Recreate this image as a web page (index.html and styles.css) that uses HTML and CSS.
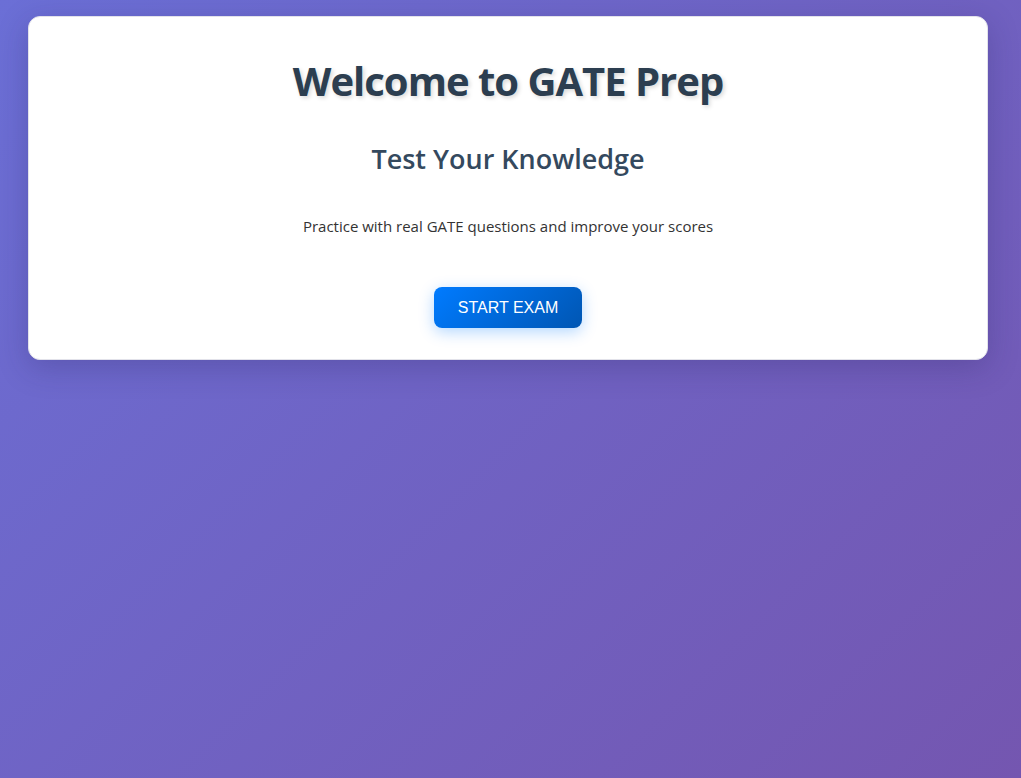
FILE: index.html
```html
<!DOCTYPE html>
<html lang="en">
<head>
<meta charset="utf-8">
<title>GATE Prep</title>
<link rel="stylesheet" href="styles.css">
</head>
<body>
<main class="page">
  <section class="card">
    <h1 class="title">Welcome to GATE Prep</h1>
    <h2 class="subtitle">Test Your Knowledge</h2>
    <p class="lead">Practice with real GATE questions and improve your scores</p>
    <button class="start-btn" type="button">START EXAM</button>
  </section>
</main>
</body>
</html>
```

FILE: styles.css
```css
html, body {
  margin: 0;
  padding: 0;
  height: 100%;
}
body {
  font-family: "Open Sans", "Noto Sans", sans-serif;
  background: linear-gradient(135deg, #6b6fd6 0%, #7456b0 100%);
  min-height: 100vh;
}
.page {
  padding: 16px 33px 0 28px;
}
.card {
  box-sizing: border-box;
  width: 960px;
  height: 344px;
  background: #fff;
  border-radius: 12px;
  border: 1px solid #e2e2ea;
  box-shadow: 0 8px 30px rgba(40, 30, 90, 0.25);
  display: flex;
  flex-direction: column;
  align-items: center;
  padding-top: 38px;
}
.title {
  margin: 0;
  font-size: 40px;
  font-weight: 700;
  letter-spacing: -1px;
  color: #2c3e50;
  line-height: 52px;
  text-shadow: 2px 2px 4px rgba(0, 0, 0, 0.15);
}
.subtitle {
  margin: 34px 0 0;
  font-size: 27px;
  font-weight: 600;
  letter-spacing: 0;
  color: #34495e;
  line-height: 36px;
}
.lead {
  margin: 38px 0 0;
  font-size: 15px;
  color: #333;
  line-height: 22px;
}
.start-btn {
  margin-top: 50px;
  width: 148px;
  height: 41px;
  border: none;
  border-radius: 8px;
  background: linear-gradient(135deg, #007bff 0%, #0056b3 100%);
  color: #fff;
  font-family: "Liberation Sans", Arial, sans-serif;
  font-size: 16px;
  box-shadow: 0 4px 15px rgba(0, 123, 255, 0.3);
  cursor: pointer;
}
```
